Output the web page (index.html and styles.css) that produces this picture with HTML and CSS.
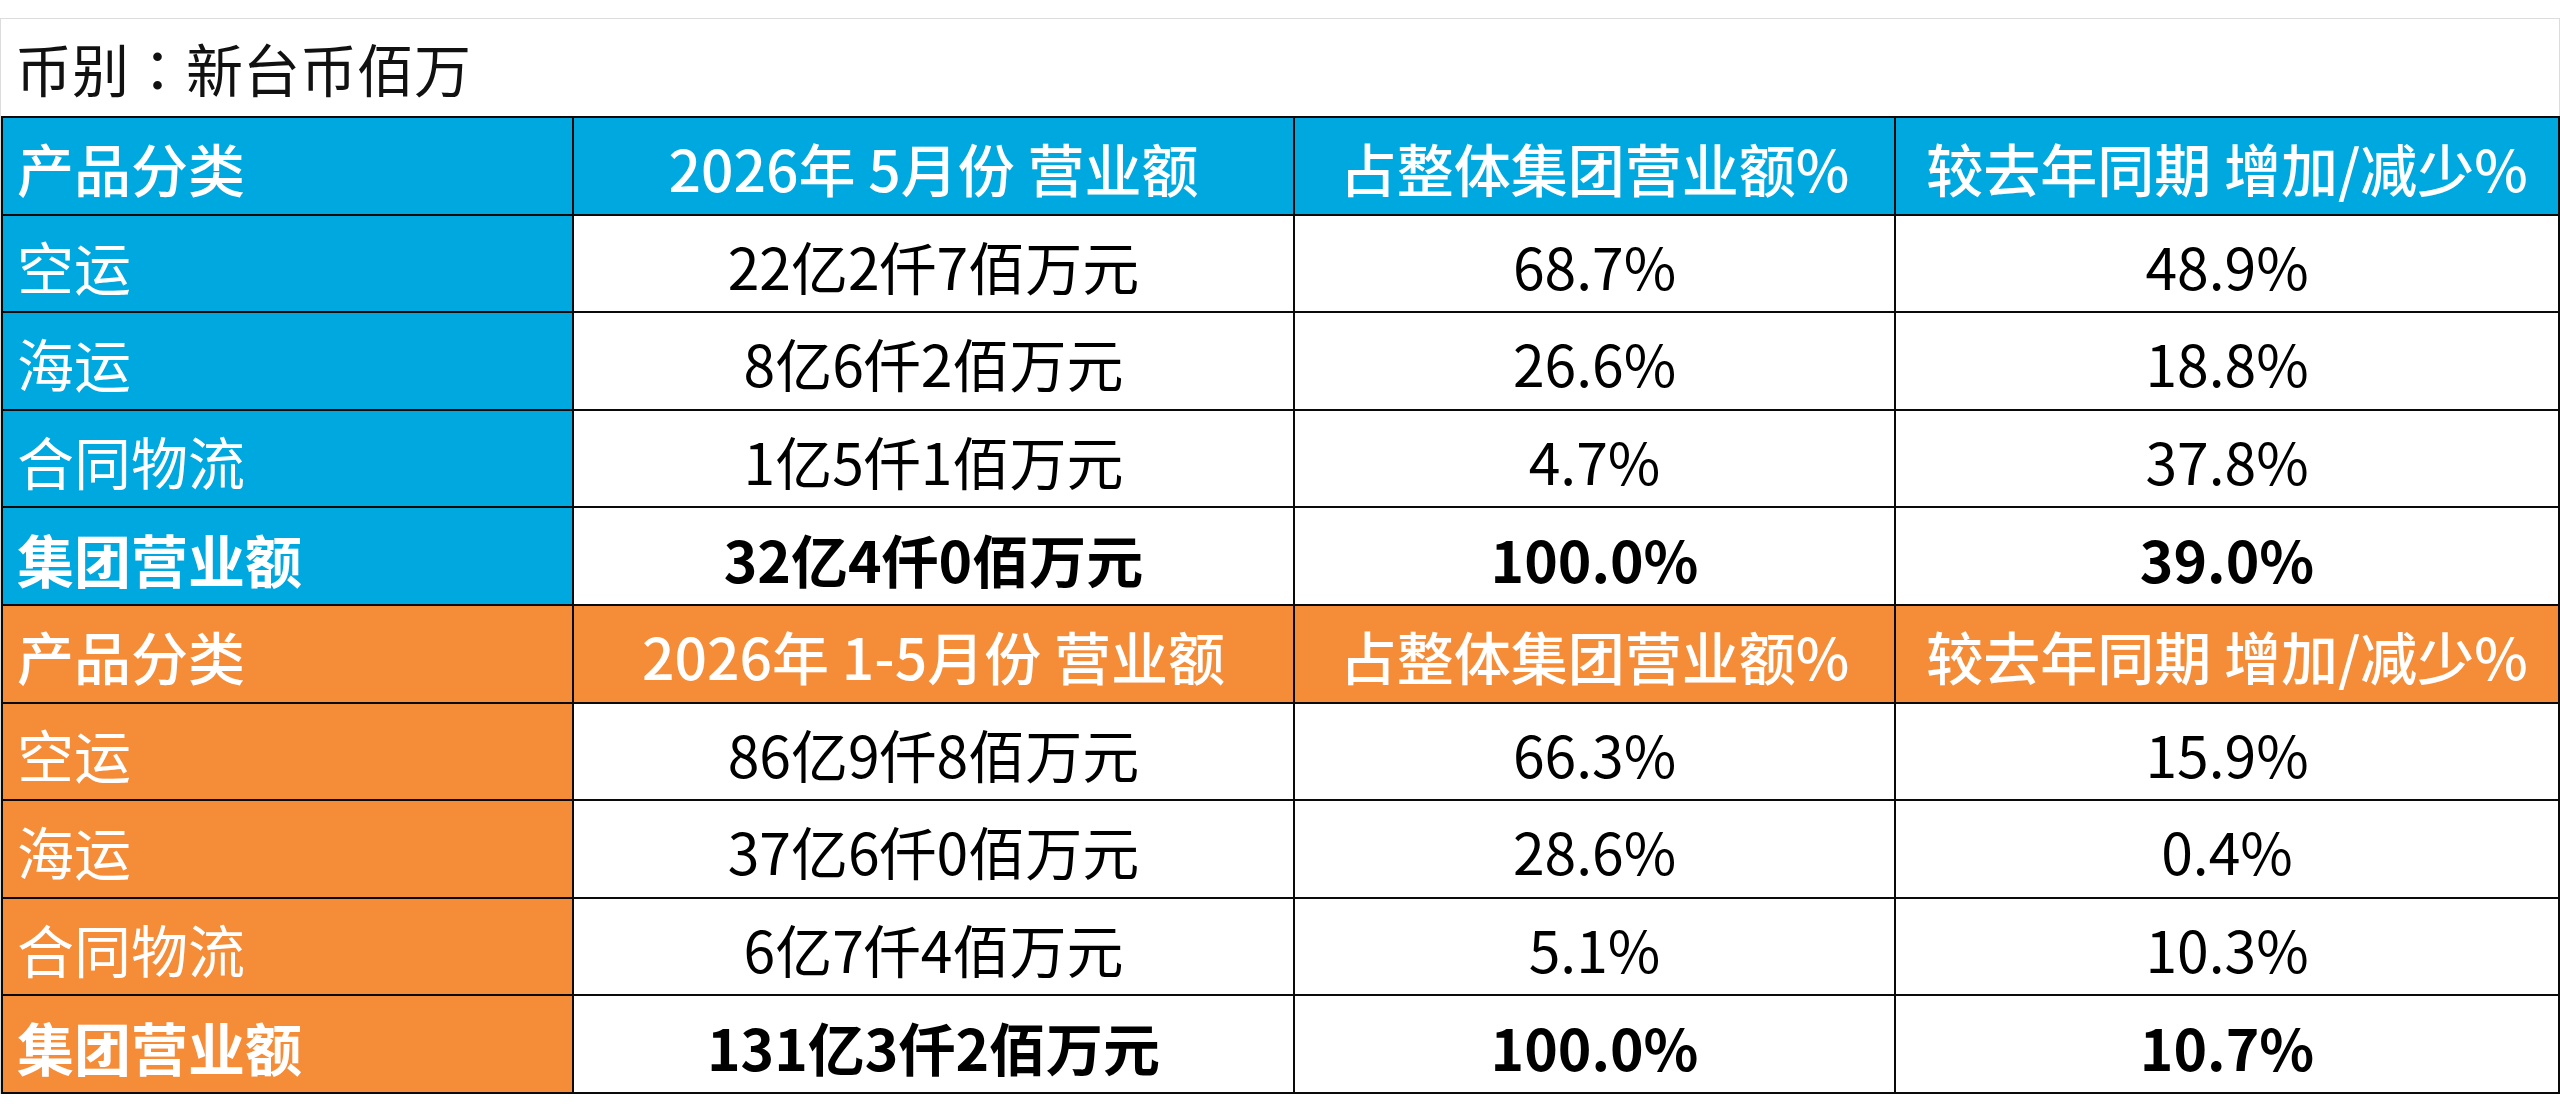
FILE: index.html
```html
<!DOCTYPE html>
<html lang="zh-CN">
<head>
<meta charset="utf-8">
<title>营业额</title>
<link rel="stylesheet" href="styles.css">
</head>
<body>
<div class="sheet">
  <div class="title" lang="zh-TW">币别：新台币佰万</div>
  <table class="grid">
    <colgroup>
      <col class="c1"><col class="c2"><col class="c3"><col class="c4">
    </colgroup>
    <tbody>
      <tr class="head blue">
        <th class="lab">产品分类</th>
        <th>2026年 5月份 营业额</th>
        <th>占整体集团营业额%</th>
        <th>较去年同期 增加/减少%</th>
      </tr>
      <tr class="blue">
        <td class="lab">空运</td><td>22亿2仟7佰万元</td><td>68.7%</td><td>48.9%</td>
      </tr>
      <tr class="blue">
        <td class="lab">海运</td><td>8亿6仟2佰万元</td><td>26.6%</td><td>18.8%</td>
      </tr>
      <tr class="blue">
        <td class="lab">合同物流</td><td>1亿5仟1佰万元</td><td>4.7%</td><td>37.8%</td>
      </tr>
      <tr class="blue total">
        <td class="lab">集团营业额</td><td>32亿4仟0佰万元</td><td>100.0%</td><td>39.0%</td>
      </tr>
      <tr class="head orange">
        <th class="lab">产品分类</th>
        <th>2026年 1-5月份 营业额</th>
        <th>占整体集团营业额%</th>
        <th>较去年同期 增加/减少%</th>
      </tr>
      <tr class="orange">
        <td class="lab">空运</td><td>86亿9仟8佰万元</td><td>66.3%</td><td>15.9%</td>
      </tr>
      <tr class="orange">
        <td class="lab">海运</td><td>37亿6仟0佰万元</td><td>28.6%</td><td>0.4%</td>
      </tr>
      <tr class="orange">
        <td class="lab">合同物流</td><td>6亿7仟4佰万元</td><td>5.1%</td><td>10.3%</td>
      </tr>
      <tr class="orange total">
        <td class="lab">集团营业额</td><td>131亿3仟2佰万元</td><td>100.0%</td><td>10.7%</td>
      </tr>
    </tbody>
  </table>
</div>
</body>
</html>
```

FILE: styles.css
```css
html, body {
  margin: 0;
  padding: 0;
  background: #ffffff;
}

body {
  font-family: "Noto Sans CJK SC", "Noto Sans", sans-serif;
  color: #000;
}

.sheet {
  margin: 18px 0 0 0;
  width: 2558px;
  border: 1px solid #dcdcdc;
  border-bottom: none;
}

.title {
  height: 97px;
  line-height: 97px;
  padding-left: 14px;
  font-family: "Noto Sans CJK TC", "Noto Sans CJK SC", sans-serif;
  font-size: 57px;
  color: #111;
}

.grid {
  width: 2557px;
  border-collapse: collapse;
  table-layout: fixed;
}

.c1 { width: 571px; }
.c2 { width: 721px; }
.c3 { width: 601px; }
.c4 { width: 664px; }

.grid th,
.grid td {
  height: 91.6px;
  padding: 4px 0 0 0;
  border: 2.5px solid #0a0a0a;
  font-size: 57px;
  text-align: center;
  vertical-align: middle;
  font-weight: 400;
  line-height: 1;
  background: #fff;
  white-space: nowrap;
}

.grid .lab {
  text-align: left;
  padding-left: 14px;
  color: #fff;
}

.grid .head th {
  color: #fff;
  font-weight: 500;
}

.blue .lab,
.blue.head th {
  background: #00a8e0;
}

.orange .lab,
.orange.head th {
  background: #f58c38;
}

.total td {
  font-weight: 700;
}
```
